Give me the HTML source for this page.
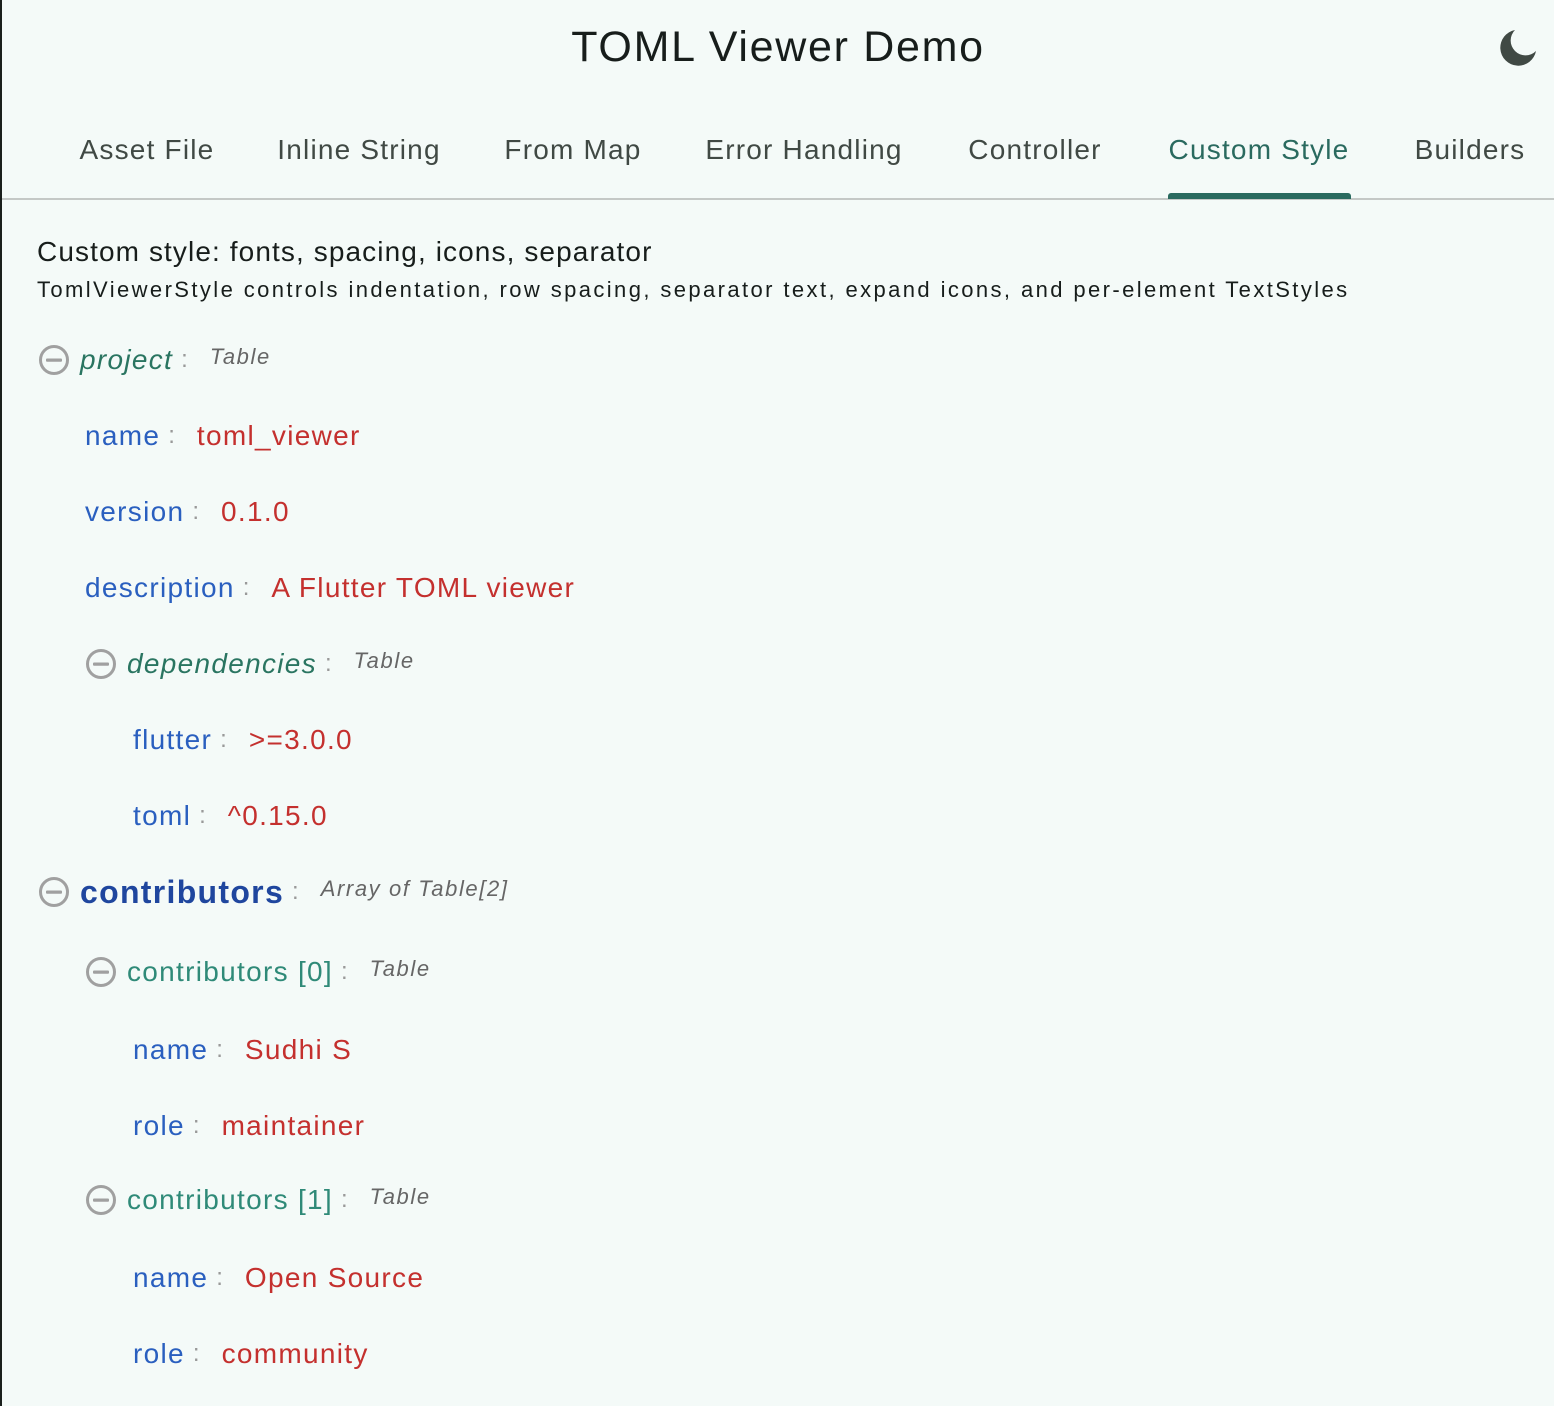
<!DOCTYPE html>
<html><head><meta charset="utf-8"><style>
*{margin:0;padding:0;box-sizing:border-box}
body{width:1554px;height:1406px;background:#f4faf8;font-family:"Liberation Sans",sans-serif;position:relative;overflow:hidden;border-left:2px solid #1a1f1c}
.a{position:absolute;white-space:nowrap}
.title{left:0;right:0;top:21px;text-align:center;font-size:43px;color:#171d1b;line-height:52px;letter-spacing:1.7px}
.tab{top:132px;font-size:28px;color:#404944;transform:translateX(-50%);line-height:36px;letter-spacing:1.2px}
.row{position:absolute;display:flex;align-items:center;height:40px;white-space:nowrap;font-size:28px;letter-spacing:1.3px}
.k{color:#2a5fbf}.v{color:#c4302e}
.c{color:#999;margin:0 22px 0 8px;font-size:24px;letter-spacing:0}
.t{color:#666;font-style:italic;font-size:22px;margin-top:-6px;letter-spacing:1.6px}
.g{color:#2a7561;font-style:italic}
.tl{color:#2f8a78}
.b{color:#1f469e;font-weight:bold;font-size:32px;letter-spacing:1.3px}
svg.i{margin-right:10px;width:32px;height:32px;flex:none}
</style></head><body>
<div class="a title">TOML Viewer Demo</div>
<svg class="a" style="left:1496px;top:28px" width="40" height="40" viewBox="0 0 40 40"><path d="M17 2 A18 18 0 1 0 38 23 A11 11 0 1 1 17 2 Z" fill="#404944"/></svg>
<div class="a tab" style="left:145px">Asset File</div>
<div class="a tab" style="left:357px">Inline String</div>
<div class="a tab" style="left:571px">From Map</div>
<div class="a tab" style="left:802px">Error Handling</div>
<div class="a tab" style="left:1033px">Controller</div>
<div class="a tab" style="left:1257px;color:#2a6a5f">Custom Style</div>
<div class="a tab" style="left:1468px">Builders</div>
<div class="a" style="left:0;right:0;top:198px;height:2px;background:#c4c8c6"></div>
<div class="a" style="left:1166px;width:183px;top:193px;height:6px;background:#2a6a5f;border-radius:3px 3px 0 0"></div>
<div class="a" style="left:35px;top:236px;font-size:28px;color:#171d1b;line-height:32px;letter-spacing:1.1px">Custom style: fonts, spacing, icons, separator</div>
<div class="a" style="left:35px;top:277px;font-size:22px;color:#171d1b;line-height:26px;letter-spacing:2.4px">TomlViewerStyle controls indentation, row spacing, separator text, expand icons, and per-element TextStyles</div>

<div class="row" style="left:36px;top:340px"><svg class="i" viewBox="0 0 32 32"><circle cx="16" cy="16" r="13.5" fill="none" stroke="#a0a0a0" stroke-width="3"/><rect x="8" y="14.5" width="16" height="3.2" rx="1" fill="#a0a0a0"/></svg><span class="g">project</span><span class="c">:</span><span class="t">Table</span></div>
<div class="row" style="left:83px;top:416px"><span class="k">name</span><span class="c">:</span><span class="v">toml_viewer</span></div>
<div class="row" style="left:83px;top:492px"><span class="k">version</span><span class="c">:</span><span class="v">0.1.0</span></div>
<div class="row" style="left:83px;top:568px"><span class="k">description</span><span class="c">:</span><span class="v">A Flutter TOML viewer</span></div>
<div class="row" style="left:83px;top:644px"><svg class="i" viewBox="0 0 32 32"><circle cx="16" cy="16" r="13.5" fill="none" stroke="#a0a0a0" stroke-width="3"/><rect x="8" y="14.5" width="16" height="3.2" rx="1" fill="#a0a0a0"/></svg><span class="g">dependencies</span><span class="c">:</span><span class="t">Table</span></div>
<div class="row" style="left:131px;top:720px"><span class="k">flutter</span><span class="c">:</span><span class="v">&gt;=3.0.0</span></div>
<div class="row" style="left:131px;top:796px"><span class="k">toml</span><span class="c">:</span><span class="v">^0.15.0</span></div>
<div class="row" style="left:36px;top:872px"><svg class="i" viewBox="0 0 32 32"><circle cx="16" cy="16" r="13.5" fill="none" stroke="#a0a0a0" stroke-width="3"/><rect x="8" y="14.5" width="16" height="3.2" rx="1" fill="#a0a0a0"/></svg><span class="b">contributors</span><span class="c">:</span><span class="t">Array of Table[2]</span></div>
<div class="row" style="left:83px;top:952px"><svg class="i" viewBox="0 0 32 32"><circle cx="16" cy="16" r="13.5" fill="none" stroke="#a0a0a0" stroke-width="3"/><rect x="8" y="14.5" width="16" height="3.2" rx="1" fill="#a0a0a0"/></svg><span class="tl">contributors [0]</span><span class="c">:</span><span class="t">Table</span></div>
<div class="row" style="left:131px;top:1030px"><span class="k">name</span><span class="c">:</span><span class="v">Sudhi S</span></div>
<div class="row" style="left:131px;top:1106px"><span class="k">role</span><span class="c">:</span><span class="v">maintainer</span></div>
<div class="row" style="left:83px;top:1180px"><svg class="i" viewBox="0 0 32 32"><circle cx="16" cy="16" r="13.5" fill="none" stroke="#a0a0a0" stroke-width="3"/><rect x="8" y="14.5" width="16" height="3.2" rx="1" fill="#a0a0a0"/></svg><span class="tl">contributors [1]</span><span class="c">:</span><span class="t">Table</span></div>
<div class="row" style="left:131px;top:1258px"><span class="k">name</span><span class="c">:</span><span class="v">Open Source</span></div>
<div class="row" style="left:131px;top:1334px"><span class="k">role</span><span class="c">:</span><span class="v">community</span></div>
</body></html>
